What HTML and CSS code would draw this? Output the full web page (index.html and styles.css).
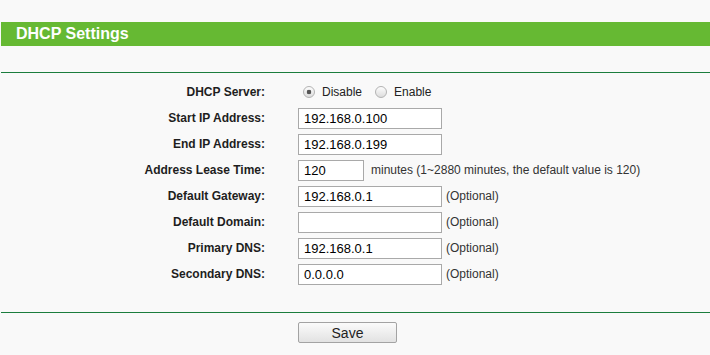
FILE: index.html
```html
<!DOCTYPE html>
<html lang="en">
<head>
  <meta charset="UTF-8" />
  <title>DHCP Settings</title>
  <link rel="stylesheet" href="styles.css">
</head>
<body>
  <div class="title-bar">DHCP Settings</div>
  <div class="divider"></div>

  <form class="settings-form">
    <label class="field-label">DHCP Server:</label>
    <div class="field">
      <label class="radio-option"><input type="radio" name="dhcp" value="0" checked> Disable</label>
      <label class="radio-option"><input type="radio" name="dhcp" value="1"> Enable</label>
    </div>

    <label class="field-label" for="startIp">Start IP Address:</label>
    <div class="field"><input type="text" id="startIp" class="text-input" value="192.168.0.100"></div>

    <label class="field-label" for="endIp">End IP Address:</label>
    <div class="field"><input type="text" id="endIp" class="text-input" value="192.168.0.199"></div>

    <label class="field-label" for="leaseTime">Address Lease Time:</label>
    <div class="field">
      <input type="text" id="leaseTime" class="text-input short" value="120">
      <span class="hint minutes">minutes (1~2880 minutes, the default value is 120)</span>
    </div>

    <label class="field-label" for="gateway">Default Gateway:</label>
    <div class="field"><input type="text" id="gateway" class="text-input" value="192.168.0.1"><span class="hint">(Optional)</span></div>

    <label class="field-label" for="domain">Default Domain:</label>
    <div class="field"><input type="text" id="domain" class="text-input" value=""><span class="hint">(Optional)</span></div>

    <label class="field-label" for="dns1">Primary DNS:</label>
    <div class="field"><input type="text" id="dns1" class="text-input" value="192.168.0.1"><span class="hint">(Optional)</span></div>

    <label class="field-label" for="dns2">Secondary DNS:</label>
    <div class="field"><input type="text" id="dns2" class="text-input" value="0.0.0.0"><span class="hint">(Optional)</span></div>
  </form>

  <div class="divider bottom"></div>
  <div class="actions">
    <button type="button" class="save-button">Save</button>
  </div>
</body>
</html>
```

FILE: styles.css
```css
* {
  margin: 0;
  padding: 0;
  box-sizing: border-box;
}
body {
  background: #f9f9f9;
  font-family: "Liberation Sans", Arial, sans-serif;
  font-size: 12px;
  color: #222;
}
.title-bar {
  margin: 22px 0 0 1px;
  height: 24px;
  line-height: 24px;
  padding-left: 15px;
  background: #66b933;
  color: #fff;
  font-size: 16px;
  font-weight: bold;
}
.divider {
  margin: 26px 0 0 1px;
  height: 1px;
  background: #1b7d3d;
}
.divider.bottom {
  margin-top: 25px;
}
.settings-form {
  display: grid;
  grid-template-columns: 265px 1fr;
  grid-auto-rows: 26px;
  column-gap: 33px;
  margin-top: 6px;
}
.field-label {
  display: flex;
  align-items: center;
  justify-content: flex-end;
  font-weight: bold;
  color: #1e1e1e;
}
.field {
  display: flex;
  align-items: center;
}
.radio-option {
  display: flex;
  align-items: center;
  margin-left: 5px;
  margin-right: 8px;
}
.radio-option input {
  appearance: none;
  -webkit-appearance: none;
  width: 12px;
  height: 12px;
  margin-right: 7px;
  border: 1px solid #b3b3b3;
  border-radius: 50%;
  background: linear-gradient(#fdfdfd, #dcdcdc);
}
.radio-option input:checked {
  background: radial-gradient(circle, #555 0, #555 2px, transparent 2.6px), linear-gradient(#fdfdfd, #dcdcdc);
}
.text-input {
  width: 144px;
  height: 21px;
  padding: 0 5px;
  border: 1px solid #a9a9a9;
  background: #fff;
  font-family: inherit;
  font-size: 13px;
  color: #000;
}
.text-input.short {
  width: 66px;
}
.hint {
  margin-left: 4px;
  color: #333;
}
.hint.minutes {
  margin-left: 7px;
}
.actions {
  padding: 9px 0 0 298px;
}
.save-button {
  width: 99px;
  height: 21px;
  border: 1px solid #a3a3a3;
  border-radius: 2px;
  background: linear-gradient(#fbfbfb, #e2e2e2);
  font-family: inherit;
  font-size: 14px;
  color: #222;
}
```
